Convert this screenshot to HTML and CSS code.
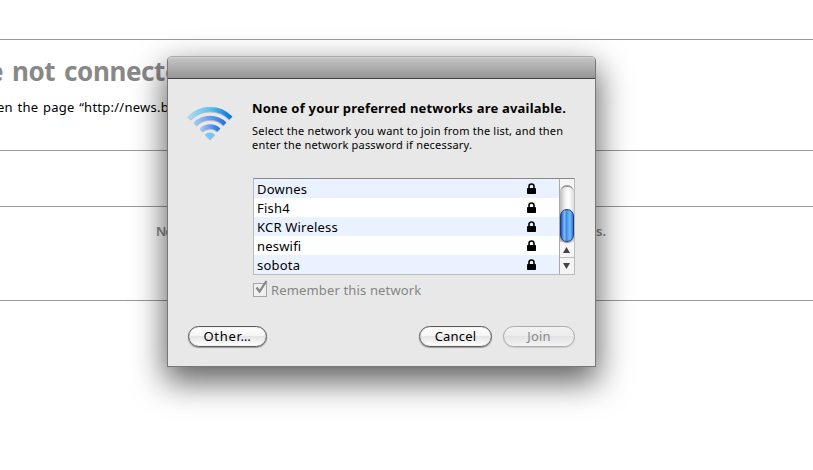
FILE: index.html
```
<!DOCTYPE html>
<html lang="en">
  <head>
    <meta charset="utf-8">
    <title>Network</title>
    <link rel="stylesheet" href="styles.css">
  </head>
  <body>
    <div class="page">
      <div class="error">
        <h1>e not connecte</h1>
        <p>en the page “http://news.b</p>
      </div>
      <div class="spacer"></div>
      <div class="help"><span class="help-start">Ne</span><span>s.</span></div>
    </div>

    <div class="dialog">
      <div class="titlebar"></div>
      <div class="content">
        <div class="intro">
          <svg class="wifi" width="46" height="34" viewBox="0 0 46 34">
            <defs>
              <linearGradient id="outer"><stop offset="0" stop-color="#a5dcf8"/><stop offset=".5" stop-color="#5cc0f0"/><stop offset="1" stop-color="#0878dc"/></linearGradient>
              <linearGradient id="inner"><stop offset="0" stop-color="#9cc8fa"/><stop offset=".5" stop-color="#649cf0"/><stop offset="1" stop-color="#2474e4"/></linearGradient>
            </defs>
            <path d="M2.200 12A29 29 0 0 1 43.800 12" fill="none" stroke="url(#outer)" stroke-width="4.400"/>
            <path d="M8.200 18A21 21 0 0 1 37.800 18" fill="none" stroke="url(#inner)" stroke-width="4.400"/>
            <path d="M14.200 24A13 13 0 0 1 31.800 24" fill="none" stroke="url(#inner)" stroke-width="4.400"/>
            <path d="M18 28.500Q23 24.500 28 28.500L23 33.500Z" fill="#6ccaf6"/>
          </svg>
          <div class="message">
            <h2>None of your preferred networks are available.</h2>
            <p>Select the network you want to join from the list, and then<br>enter the network password if necessary.</p>
          </div>
        </div>

        <div class="list">
          <ul>
            <li><span>Downes</span><svg class="lock" width="9" height="11"><use href="#lock"/></svg></li>
            <li><span>Fish4</span><svg class="lock" width="9" height="11"><use href="#lock"/></svg></li>
            <li><span>KCR Wireless</span><svg class="lock" width="9" height="11"><use href="#lock"/></svg></li>
            <li><span>neswifi</span><svg class="lock" width="9" height="11"><use href="#lock"/></svg></li>
            <li><span>sobota</span><svg class="lock" width="9" height="11"><use href="#lock"/></svg></li>
          </ul>
          <div class="scrollbar">
            <div class="track"><div class="thumb"></div></div>
            <div class="arrow"><svg width="7" height="6"><path d="M3.500 0L7 6H0Z" fill="#444"/></svg></div>
            <div class="arrow down"><svg width="7" height="6"><path d="M0 0H7L3.500 6Z" fill="#444"/></svg></div>
          </div>
        </div>

        <div class="remember">
          <svg width="17" height="18" viewBox="0 0 17 18">
            <rect x=".5" y="4.500" width="13" height="13" fill="#f0f0f0" stroke="#a5a5a5"/>
            <path d="M3.500 8.500L6.500 12.500L13.500 2" fill="none" stroke="#858585" stroke-width="2.200"/>
          </svg>
          <span>Remember this network</span>
        </div>

        <div class="buttons">
          <button class="other">Other…</button>
          <button class="cancel">Cancel</button>
          <button class="join" disabled>Join</button>
        </div>
      </div>
    </div>

    <svg class="symbols" width="0" height="0">
      <symbol id="lock" viewBox="0 0 9 11">
        <path d="M2 6V3.300A2.500 2.300 0 0 1 7 3.300V6" fill="none" stroke="#000" stroke-width="1.600"/>
        <rect y="5" width="9" height="6" rx=".8"/>
      </symbol>
    </svg>
  </body>
</html>
```

FILE: styles.css
```
* {
  box-sizing: border-box;
}
body {
  margin: 0;
  height: 470px;
  overflow: hidden;
  background: #fff;
  color: #000;
  font-family: "Noto Sans", "Open Sans", sans-serif;
  font-size: 13px;
}
h1, h2, p, ul {
  margin: 0;
  padding: 0;
}
.page {
  padding-top: 39px;
}
.error {
  height: 111px;
  padding-top: 14px;
  border-top: 1px solid #999;
  white-space: nowrap;
}
.error h1 {
  margin-left: -12px;
  color: #888;
  font-size: 26px;
  line-height: 34px;
  letter-spacing: -.4px;
  word-spacing: 2.500px;
}
.error p {
  margin: 10px 0 0 -3px;
  line-height: 18px;
  letter-spacing: .25px;
  word-spacing: 1px;
}
.spacer {
  height: 56px;
  border-top: 1px solid #999;
}
.help {
  display: flex;
  justify-content: space-between;
  height: 95px;
  padding: 15px 207px 0 156px;
  border-top: 1px solid #999;
  border-bottom: 1px solid #999;
  color: #888;
  font-weight: 600;
  line-height: 18px;
}
.help-start {
  letter-spacing: -1px;
}

/* dialog floats over the page */
.dialog {
  position: absolute;
  top: 56px;
  left: 167px;
  width: 429px;
  height: 311px;
  border: 1px solid #777;
  border-top-color: #aaa;
  border-radius: 5px 5px 0 0;
  background: #e8e8e8;
  box-shadow: 0 13px 32px 2px rgba(0, 0, 0, .62);
}
.titlebar {
  height: 22px;
  border-top: 1px solid #d0d0d0;
  border-bottom: 1px solid #444;
  border-radius: 4px 4px 0 0;
  background: linear-gradient(#c4c4c4, #969696);
}
.content {
  padding: 21px 20px 0 19px;
}
.intro {
  display: flex;
  height: 78px;
}
.wifi {
  margin-top: 6px;
  filter: drop-shadow(0 1px 0 #bbb);
}
.message {
  margin: -1px 0 0 19px;
  white-space: nowrap;
}
h2 {
  font-size: 13px;
  line-height: 18px;
  letter-spacing: .21px;
}
.message p {
  margin-top: 7px;
  font-size: 11px;
  line-height: 14px;
  letter-spacing: .2px;
}
.list {
  display: flex;
  width: 322px;
  height: 97px;
  margin-left: 66px;
  border: 1px solid #bbb;
  border-top-color: #888;
}
ul {
  flex: 1;
  list-style: none;
}
li {
  display: flex;
  align-items: center;
  justify-content: space-between;
  height: 19px;
  padding: 0 23px 0 3px;
  background: #fff;
  line-height: 17px;
  letter-spacing: .2px;
}
li span {
  padding-top: 2px;
}
li:nth-child(odd) {
  background: #ebf2ff;
}
.lock {
  display: block;
}
.scrollbar {
  width: 15px;
  border-left: 1px solid #aaa;
  background: #f5f5f5;
}
.track {
  height: 57px;
  margin-top: 6px;
  padding-top: 23px;
  border-top: 2px solid #999;
  border-radius: 8px 8px 0 0;
  background: linear-gradient(90deg, #bbb, #eee 35%, #fff 60%, #ddd);
}
.thumb {
  height: 33px;
  margin-top: -1px;
  border: 1px solid #223b80;
  border-radius: 7px;
  background: linear-gradient(90deg, #1654bd, #86bcf5 28%, #3e8bea 45%, #70c1fc 75%, #326fc0);
  box-shadow: 0 1px 1px #888;
}
.arrow {
  display: flex;
  align-items: center;
  justify-content: center;
  height: 15px;
  padding-right: 2px;
}
.arrow.down {
  height: 17px;
  border-top: 1px solid #bbb;
}
.remember {
  display: flex;
  height: 18px;
  margin: 4px 0 0 66px;
  color: #858585;
  line-height: 22px;
  letter-spacing: .15px;
  white-space: nowrap;
}
.remember span {
  margin-left: 1px;
}
.buttons {
  display: flex;
  margin-top: 29px;
}
button {
  height: 21px;
  padding: 0 0 2px;
  border: 1px solid #5a5a5a;
  border-radius: 11px;
  background: linear-gradient(#fff, #f5f5f5 45%, #e5e5e5 50%, #fff);
  box-shadow: 0 1px 1px #999, inset 0 0 1px #777;
  color: #000;
  font: 13px/18px "Noto Sans", sans-serif;
  letter-spacing: .2px;
}
.other {
  width: 79px;
  margin-left: 1px;
  letter-spacing: .7px;
}
.cancel {
  width: 73px;
  margin-left: auto;
}
.join {
  width: 72px;
  margin-left: 11px;
  border-color: #aaa;
  background: linear-gradient(#f2f2f2, #ededed 45%, #e3e3e3 50%, #f4f4f4);
  box-shadow: 0 1px 1px #ccc;
  color: #888;
}
.symbols {
  position: absolute;
}
```
